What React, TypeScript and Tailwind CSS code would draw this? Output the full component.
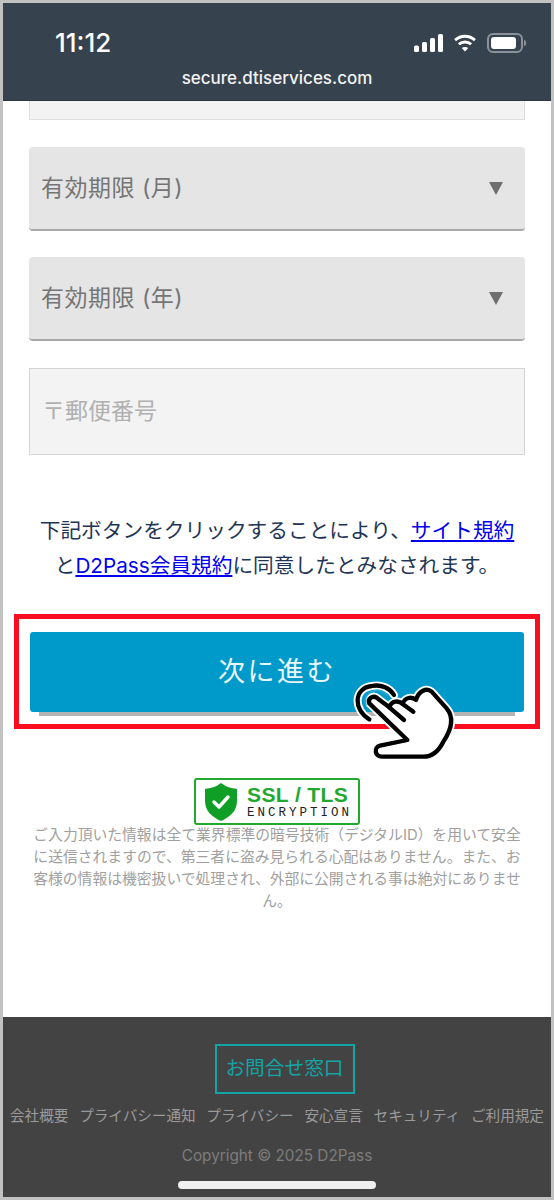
const jp = "font-['Inter','Noto_Sans_CJK_JP',sans-serif]";

const SelectBox = ({ label }: { label: string }) => (
  <div className="flex h-[84px] items-center justify-between rounded-[4px] border-b-2 border-[#a8a8a8] bg-[#e5e5e5] pl-3 pr-[20px]">
    <span className="text-[23px] leading-none tracking-[0.5px] text-[#757575]">{label}</span>
    <span className="mr-[2px] h-0 w-0 border-x-[7.5px] border-t-[13px] border-x-transparent border-t-[#6f6f6f]" />
  </div>
);

// traced over the reference crop, 3 units to a pixel
const HandIcon = () => {
  const arc = "M118 178C70 150 70 85 125 78C155 72 180 85 192 105";
  const hand =
    "M118 130C112 116 128 105 140 113L178 142C185 122 205 120 218 132C224 112 245 108 258 120C266 92 290 82 305 95L350 145C375 175 360 215 340 245C325 275 305 290 280 290L155 290C135 290 130 262 150 257L232 240Z";
  return (
    <svg className="absolute left-[327px] top-[657px]" width="140" height="110" viewBox="0 0 420 330" fill="none" strokeLinecap="round" strokeLinejoin="round">
      <path d={arc} stroke="#fff" strokeWidth="24" />
      <path d={hand} fill="#fff" stroke="#fff" strokeWidth="24" />
      <path d={arc} stroke="#000" strokeWidth="13" />
      <path d="M108 135C98 110 120 90 145 92C155 93 165 98 170 105" stroke="#27a9d9" strokeWidth="5" />
      <path d={hand} fill="#fff" stroke="#000" strokeWidth="13" />
      <path d="M178 142L222 180M218 132L250 155" stroke="#000" strokeWidth="13" />
    </svg>
  );
};

const SslBadge = () => (
  <div className="flex h-[47px] w-[166px] items-center gap-[10px] self-center rounded-[3px] border-2 border-[#22a82e] bg-white pl-[9px]">
    <svg width="32" height="38" viewBox="0 0 32 38">
      <path d="M16 0C21 4 26 5 32 6V18C32 28 25 34 16 38C7 34 0 28 0 18V6C6 5 11 4 16 0Z" fill="#0f9f27" />
      <path d="M9 19L14 24L23 14" stroke="#fff" strokeWidth="3.5" fill="none" strokeLinecap="round" strokeLinejoin="round" />
    </svg>
    <div className="flex flex-col">
      <span className="font-['Liberation_Sans',sans-serif] text-[21px] font-bold leading-[22px] tracking-[0.4px] text-[#22a82e]">SSL / TLS</span>
      <span className="font-['Liberation_Mono',monospace] text-[12.5px] leading-[14px] tracking-[3px] text-[#222]">ENCRYPTION</span>
    </div>
  </div>
);

export default function App() {
  return (
    <div className={`relative flex h-[1200px] w-[554px] flex-col overflow-hidden border-[3px] border-[#c2c2c2] bg-white ${jp}`}>
      <header className="relative h-[98px] shrink-0 border-b border-[#2c3641] bg-[#37424f] text-white">
        <div className="flex items-center justify-between pl-[52px] pr-[25px] pt-[25px]">
          <span className="text-[26px] font-medium leading-[30px]">11:12</span>
          <div className="flex items-center gap-[10px]">
            <svg width="29" height="18" viewBox="0 0 29 18" fill="#fff">
              <rect x="0" y="11.5" width="5" height="6.5" rx="1.5" />
              <rect x="8" y="8" width="5" height="10" rx="1.5" />
              <rect x="16" y="4" width="5" height="14" rx="1.5" />
              <rect x="24" y="0" width="5" height="18" rx="1.5" />
            </svg>
            <svg width="24" height="18" viewBox="0 0 24 19" fill="none" stroke="#fff" strokeWidth="3">
              <path d="M1.5 6.5C7.5 1 16.5 1 22.5 6.5" />
              <path d="M5.5 10.8C9 7.6 15 7.6 18.5 10.8" />
              <path d="M12 18.5L8.5 14.8C10.5 13.2 13.5 13.2 15.5 14.8Z" fill="#fff" stroke="none" />
            </svg>
            <div className="flex items-center gap-[1px]">
              <div className="h-[20px] w-[36px] rounded-[6px] border-2 border-[#8a929b] p-[2px]">
                <div className="h-full w-[25px] rounded-[3px] bg-white" />
              </div>
              <div className="h-[6px] w-[2px] rounded-r-sm bg-[#8a929b]" />
            </div>
          </div>
        </div>
        <p className="pt-[10px] text-center text-[17px] font-medium leading-[20px] text-[#f2f2f2]">secure.dtiservices.com</p>
      </header>

      <main className="flex flex-1 flex-col">
        <div className="flex flex-col px-[26px]">
          <div className="mb-[27px] h-[19px] border-x border-b border-[#dedede] bg-[#f3f3f3]" />
          <div className="flex flex-col gap-[26px]">
            <SelectBox label="有効期限 (月)" />
            <SelectBox label="有効期限 (年)" />
          </div>
          <div className="mt-[27px] flex h-[87px] items-center border border-[#d5d5d5] bg-[#f3f3f3] pl-3 text-[23px] text-[#b0b0b0]">
            〒郵便番号
          </div>
          <p className="mt-[58px] text-center text-[20.7px] leading-[35px] text-[#1f3556]">
            下記ボタンをクリックすることにより、<a className="text-[#0000ee] underline">サイト規約</a>
            <br />
            と<a className="text-[#0000ee] underline">D2Pass会員規約</a>に同意したとみなされます。
          </p>
        </div>

        <div className="mx-[11px] mt-[31px] border-[5px] border-[#fb0d21] px-[11px] pb-[8px] pt-[13px]">
          <div className="flex h-[80px] items-center justify-center rounded-[3px] bg-[#009aca] text-[27px] tracking-[2.5px] text-[#e9f6fb]">
            次に進む
          </div>
          <div className="ml-[9px] mr-[9px] h-[4px] bg-[#b4b4b4]" />
        </div>

        <div className="mt-[49px] flex flex-col px-[26px]">
          <SslBadge />
          <p className="-mt-[1px] text-center text-[14.8px] leading-[22px] text-[#a0a0a0]">
            ご入力頂いた情報は全て業界標準の暗号技術（デジタルID）を用いて安全に送信されますので、第三者に盗み見られる心配はありません。また、お客様の情報は機密扱いで処理され、外部に公開される事は絶対にありません。
          </p>
        </div>
      </main>

      <footer className="relative flex h-[180px] shrink-0 flex-col items-center bg-[#434343] pt-[27px]">
        <div className="ml-[15px] flex h-[50px] w-[140px] items-center justify-center border-2 border-[#12a4a6] text-[19.7px] text-[#12a4a6]">
          お問合せ窓口
        </div>
        <nav className="mt-[11px] flex w-full justify-between px-[7px] text-[14.6px] leading-[22px] text-[#9a9a9a]">
          <span>会社概要</span>
          <span>プライバシー通知</span>
          <span>プライバシー</span>
          <span>安心宣言</span>
          <span>セキュリティ</span>
          <span>ご利用規定</span>
        </nav>
        <p className="mt-[18px] text-[15.3px] leading-[22px] text-[#7d7d7d]">Copyright © 2025 D2Pass</p>
        <div className="mt-[14px] h-[8px] w-[198px] rounded-full bg-[#efefef]" />
      </footer>

      <HandIcon />
    </div>
  );
}
